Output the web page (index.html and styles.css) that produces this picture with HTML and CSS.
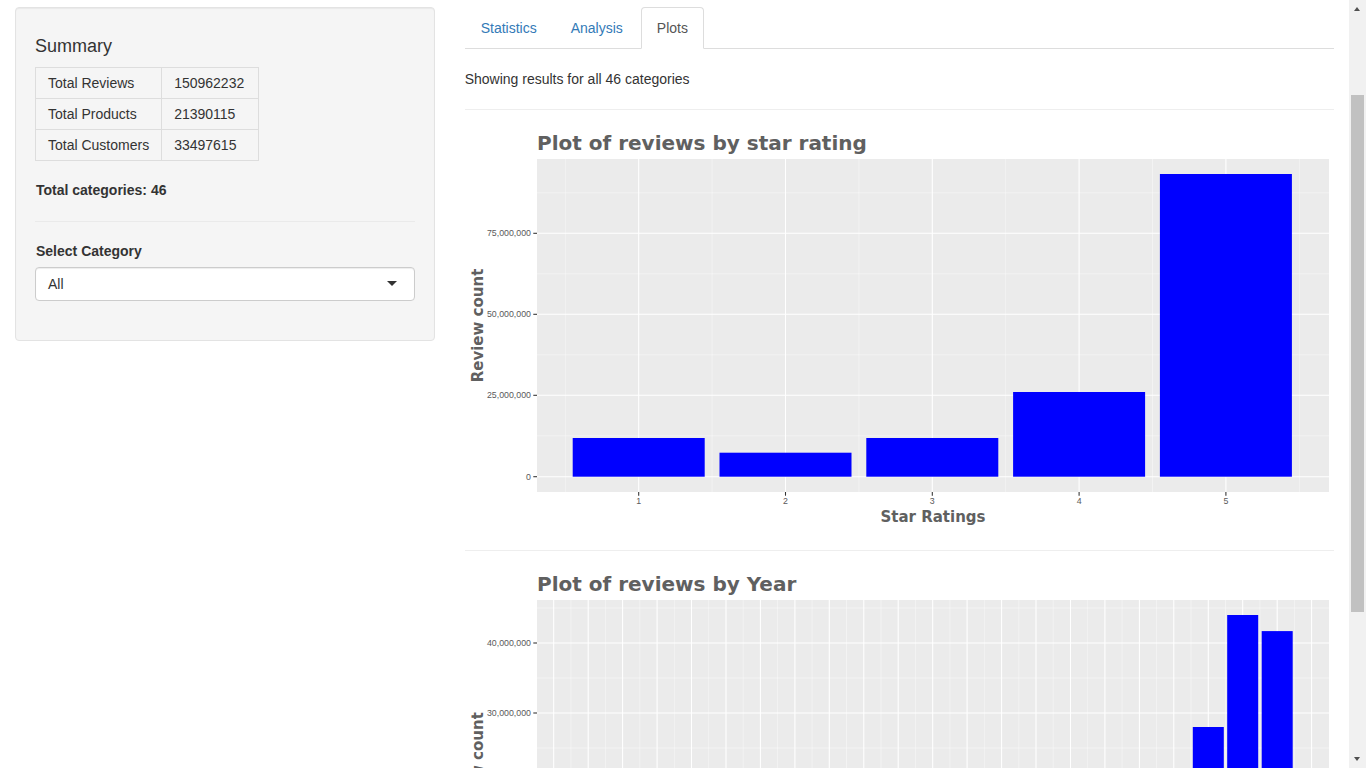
FILE: index.html
```html
<!DOCTYPE html>
<html lang="en">
<head>
<meta charset="utf-8">
<title>Amazon Reviews</title>
<link rel="stylesheet" href="styles.css">
</head>
<body>
<div class="page">
  <div class="sidebar">
    <form class="well">
      <h4>Summary</h4>
      <table class="summary">
        <tbody>
          <tr><td>Total Reviews</td><td>150962232</td></tr>
          <tr><td>Total Products</td><td>21390115</td></tr>
          <tr><td>Total Customers</td><td>33497615</td></tr>
        </tbody>
      </table>
      <div class="total">Total categories: 46</div>
      <hr class="well-hr">
      <div class="form-group">
        <label class="ctrl-label">Select Category</label>
        <div class="select-box">All</div>
      </div>
    </form>
  </div>

  <div class="main">
    <ul class="tabs">
      <li><a href="#">Statistics</a></li>
      <li><a href="#">Analysis</a></li>
      <li><a href="#" class="active">Plots</a></li>
    </ul>
    <div class="showing">Showing results for all 46 categories</div>
    <hr class="sep">

    <svg class="plot" width="869" height="400" viewBox="0 0 869 400">
      <text class="p-title" x="72" y="19.5">Plot of reviews by star rating</text>
      <rect x="72" y="29" width="792" height="333" fill="#ebebeb"/>
      <g class="grid-minor">
        <line x1="72" x2="864" y1="62.8" y2="62.8"/>
        <line x1="72" x2="864" y1="143.8" y2="143.8"/>
        <line x1="72" x2="864" y1="224.8" y2="224.8"/>
        <line x1="72" x2="864" y1="305.8" y2="305.8"/>
        <line y1="29" y2="362" x1="100.3" x2="100.3"/>
        <line y1="29" y2="362" x1="247.1" x2="247.1"/>
        <line y1="29" y2="362" x1="393.9" x2="393.9"/>
        <line y1="29" y2="362" x1="540.7" x2="540.7"/>
        <line y1="29" y2="362" x1="687.5" x2="687.5"/>
        <line y1="29" y2="362" x1="834.3" x2="834.3"/>
      </g>
      <g class="grid-major">
        <line x1="72" x2="864" y1="103.3" y2="103.3"/>
        <line x1="72" x2="864" y1="184.3" y2="184.3"/>
        <line x1="72" x2="864" y1="265.3" y2="265.3"/>
        <line x1="72" x2="864" y1="346.7" y2="346.7"/>
        <line y1="29" y2="362" x1="173.7" x2="173.7"/>
        <line y1="29" y2="362" x1="320.5" x2="320.5"/>
        <line y1="29" y2="362" x1="467.3" x2="467.3"/>
        <line y1="29" y2="362" x1="614.1" x2="614.1"/>
        <line y1="29" y2="362" x1="760.9" x2="760.9"/>
      </g>
      <g class="bar">
        <rect x="107.7" y="308" width="132" height="38.7"/>
        <rect x="254.5" y="322.7" width="132" height="24"/>
        <rect x="401.3" y="308" width="132" height="38.7"/>
        <rect x="548.1" y="262" width="132" height="84.7"/>
        <rect x="694.9" y="44" width="132" height="302.7"/>
      </g>
      <g class="tick">
        <line x1="68.3" x2="72" y1="103.3" y2="103.3"/>
        <line x1="68.3" x2="72" y1="184.3" y2="184.3"/>
        <line x1="68.3" x2="72" y1="265.3" y2="265.3"/>
        <line x1="68.3" x2="72" y1="346.7" y2="346.7"/>
        <line y1="362" y2="365.7" x1="173.7" x2="173.7"/>
        <line y1="362" y2="365.7" x1="320.5" x2="320.5"/>
        <line y1="362" y2="365.7" x1="467.3" x2="467.3"/>
        <line y1="362" y2="365.7" x1="614.1" x2="614.1"/>
        <line y1="362" y2="365.7" x1="760.9" x2="760.9"/>
      </g>
      <g class="p-tick y-lab">
        <text x="66" y="106.4">75,000,000</text>
        <text x="66" y="187.4">50,000,000</text>
        <text x="66" y="268.4">25,000,000</text>
        <text x="66" y="349.8">0</text>
      </g>
      <g class="p-tick x-lab">
        <text x="173.7" y="374">1</text>
        <text x="320.5" y="374">2</text>
        <text x="467.3" y="374">3</text>
        <text x="614.1" y="374">4</text>
        <text x="760.9" y="374">5</text>
      </g>
      <text class="p-axis-title" x="468" y="391.7" text-anchor="middle">Star Ratings</text>
      <text class="p-axis-title" transform="translate(18,195.5) rotate(-90)" text-anchor="middle">Review count</text>
    </svg>

    <hr class="sep">

    <svg class="plot" width="869" height="400" viewBox="0 0 869 400">
      <text class="p-title" x="72" y="19.5">Plot of reviews by Year</text>
      <rect x="72" y="29" width="792" height="338.4" fill="#ebebeb"/>
      <g class="grid-minor">
        <line x1="72" x2="864" y1="37" y2="37"/>
        <line x1="72" x2="864" y1="107" y2="107"/>
        <line x1="72" x2="864" y1="177" y2="177"/>
        <line x1="72" x2="864" y1="247" y2="247"/>
        <line x1="72" x2="864" y1="317" y2="317"/>
        <line y1="29" y2="367.4" x1="105.9" x2="105.9"/>
        <line y1="29" y2="367.4" x1="140.4" x2="140.4"/>
        <line y1="29" y2="367.4" x1="174.8" x2="174.8"/>
        <line y1="29" y2="367.4" x1="209.3" x2="209.3"/>
        <line y1="29" y2="367.4" x1="243.7" x2="243.7"/>
        <line y1="29" y2="367.4" x1="278.2" x2="278.2"/>
        <line y1="29" y2="367.4" x1="312.6" x2="312.6"/>
        <line y1="29" y2="367.4" x1="347.1" x2="347.1"/>
        <line y1="29" y2="367.4" x1="381.5" x2="381.5"/>
        <line y1="29" y2="367.4" x1="416" x2="416"/>
        <line y1="29" y2="367.4" x1="450.4" x2="450.4"/>
        <line y1="29" y2="367.4" x1="484.9" x2="484.9"/>
        <line y1="29" y2="367.4" x1="519.3" x2="519.3"/>
        <line y1="29" y2="367.4" x1="553.8" x2="553.8"/>
        <line y1="29" y2="367.4" x1="588.2" x2="588.2"/>
        <line y1="29" y2="367.4" x1="622.7" x2="622.7"/>
        <line y1="29" y2="367.4" x1="657.1" x2="657.1"/>
        <line y1="29" y2="367.4" x1="691.6" x2="691.6"/>
        <line y1="29" y2="367.4" x1="726" x2="726"/>
        <line y1="29" y2="367.4" x1="760.5" x2="760.5"/>
        <line y1="29" y2="367.4" x1="794.9" x2="794.9"/>
        <line y1="29" y2="367.4" x1="829.4" x2="829.4"/>
      </g>
      <g class="grid-major">
        <line x1="72" x2="864" y1="72" y2="72"/>
        <line x1="72" x2="864" y1="142" y2="142"/>
        <line x1="72" x2="864" y1="212" y2="212"/>
        <line x1="72" x2="864" y1="282" y2="282"/>
        <line x1="72" x2="864" y1="352" y2="352"/>
        <line y1="29" y2="367.4" x1="88.7" x2="88.7"/>
        <line y1="29" y2="367.4" x1="123.2" x2="123.2"/>
        <line y1="29" y2="367.4" x1="157.6" x2="157.6"/>
        <line y1="29" y2="367.4" x1="192.1" x2="192.1"/>
        <line y1="29" y2="367.4" x1="226.5" x2="226.5"/>
        <line y1="29" y2="367.4" x1="261" x2="261"/>
        <line y1="29" y2="367.4" x1="295.4" x2="295.4"/>
        <line y1="29" y2="367.4" x1="329.9" x2="329.9"/>
        <line y1="29" y2="367.4" x1="364.3" x2="364.3"/>
        <line y1="29" y2="367.4" x1="398.8" x2="398.8"/>
        <line y1="29" y2="367.4" x1="433.2" x2="433.2"/>
        <line y1="29" y2="367.4" x1="467.7" x2="467.7"/>
        <line y1="29" y2="367.4" x1="502.1" x2="502.1"/>
        <line y1="29" y2="367.4" x1="536.6" x2="536.6"/>
        <line y1="29" y2="367.4" x1="571" x2="571"/>
        <line y1="29" y2="367.4" x1="605.5" x2="605.5"/>
        <line y1="29" y2="367.4" x1="639.9" x2="639.9"/>
        <line y1="29" y2="367.4" x1="674.4" x2="674.4"/>
        <line y1="29" y2="367.4" x1="708.8" x2="708.8"/>
        <line y1="29" y2="367.4" x1="743.3" x2="743.3"/>
        <line y1="29" y2="367.4" x1="777.7" x2="777.7"/>
        <line y1="29" y2="367.4" x1="812.2" x2="812.2"/>
        <line y1="29" y2="367.4" x1="846.6" x2="846.6"/>
      </g>
      <g class="bar">
        <rect x="176.6" y="351.3" width="31" height="0.7"/>
        <rect x="211" y="349.9" width="31" height="2.1"/>
        <rect x="245.5" y="347.8" width="31" height="4.2"/>
        <rect x="279.9" y="345" width="31" height="7"/>
        <rect x="314.4" y="340.8" width="31" height="11.2"/>
        <rect x="348.8" y="340.8" width="31" height="11.2"/>
        <rect x="383.3" y="340.1" width="31" height="11.9"/>
        <rect x="417.7" y="339.4" width="31" height="12.6"/>
        <rect x="452.2" y="336.6" width="31" height="15.4"/>
        <rect x="486.6" y="332.4" width="31" height="19.6"/>
        <rect x="521.1" y="328.9" width="31" height="23.1"/>
        <rect x="555.5" y="319.8" width="31" height="32.2"/>
        <rect x="590" y="315.6" width="31" height="36.4"/>
        <rect x="624.4" y="309.3" width="31" height="42.7"/>
        <rect x="658.9" y="300.9" width="31" height="51.1"/>
        <rect x="693.3" y="265.2" width="31" height="86.8"/>
        <rect x="727.8" y="156" width="31" height="196"/>
        <rect x="762.2" y="44" width="31" height="308"/>
        <rect x="796.7" y="60.1" width="31" height="291.9"/>
        <rect x="831.1" y="268" width="31" height="84"/>
      </g>
      <g class="tick">
        <line x1="68.3" x2="72" y1="72" y2="72"/>
        <line x1="68.3" x2="72" y1="142" y2="142"/>
        <line x1="68.3" x2="72" y1="212" y2="212"/>
        <line x1="68.3" x2="72" y1="282" y2="282"/>
        <line x1="68.3" x2="72" y1="352" y2="352"/>
      </g>
      <g class="p-tick y-lab">
        <text x="66" y="75.1">40,000,000</text>
        <text x="66" y="145.1">30,000,000</text>
      </g>
      <text class="p-axis-title" transform="translate(18,198) rotate(-90)" text-anchor="middle">Review count</text>
    </svg>
  </div>
</div>

<div class="scrollbar" aria-hidden="true">
  <span class="sb-up"></span>
  <span class="sb-thumb"></span>
  <span class="sb-down"></span>
</div>
</body>
</html>
```

FILE: styles.css
```css
html, body {
  margin: 0;
  height: 100%;
  overflow: hidden;
}

body {
  font-family: "Liberation Sans", Arial, sans-serif;
  font-size: 14px;
  line-height: 1.42857;
  color: #333;
  background: #fff;
}

.page {
  display: grid;
  grid-template-columns: 4fr 8fr;
  width: 1349px;
  padding-top: 7px;
}

.sidebar,
.main {
  padding: 0 15px;
  min-width: 0;
}

/* ---------- sidebar ---------- */
.well {
  background: #f5f5f5;
  border: 1px solid #e3e3e3;
  border-radius: 4px;
  box-shadow: inset 0 1px 1px rgba(0, 0, 0, 0.05);
  padding: 19px;
  margin: 0;
}

.well h4 {
  font-size: 18px;
  font-weight: normal;
  line-height: 1.1;
  margin: 10px 0;
  color: #333;
}

.summary {
  border-collapse: collapse;
  border: 1px solid #ddd;
  margin-bottom: 20px;
}

.summary td {
  border: 1px solid #ddd;
  padding: 5px 12px;
  line-height: 20px;
  white-space: nowrap;
}

.summary td + td {
  padding-right: 14px;
}

.total {
  font-weight: bold;
  padding-left: 1px;
}

.well-hr {
  margin: 20px 0;
  border: 0;
  border-top: 1px solid #eaeaea;
}

.form-group {
  margin-bottom: 20px;
}

.ctrl-label {
  display: inline-block;
  font-weight: bold;
  margin-bottom: 5px;
  padding-left: 1px;
}

.select-box {
  position: relative;
  background: #fff;
  border: 1px solid #ccc;
  border-radius: 4px;
  box-shadow: inset 0 1px 1px rgba(0, 0, 0, 0.075);
  padding: 6px 12px;
  line-height: 20px;
  color: #333;
}

.select-box::after {
  content: "";
  position: absolute;
  right: 17px;
  top: 50%;
  margin-top: -3px;
  width: 0;
  height: 0;
  border-style: solid;
  border-width: 5px 5px 0 5px;
  border-color: #333 transparent transparent transparent;
}

/* ---------- main ---------- */
.tabs {
  display: flex;
  list-style: none;
  margin: 0;
  padding: 0;
  border-bottom: 1px solid #ddd;
}

.tabs li {
  margin-bottom: -1px;
}

.tabs a {
  display: block;
  padding: 10px 15px;
  margin-right: 2px;
  line-height: 20px;
  border: 1px solid transparent;
  border-radius: 4px 4px 0 0;
  color: #337ab7;
  text-decoration: none;
}

.tabs a.active {
  color: #555;
  background: #fff;
  border-color: #ddd #ddd transparent #ddd;
}

.showing {
  box-sizing: border-box;
  margin-top: 20px;
  padding-top: 1px;
  height: 20px;
}

.sep {
  margin: 20px 0;
  border: 0;
  border-top: 1px solid #eee;
}

.plot {
  display: block;
}

/* ---------- plot styling ---------- */
.p-title {
  font-family: "DejaVu Sans", sans-serif;
  font-weight: bold;
  font-size: 20px;
  fill: #606060;
}

.p-axis-title {
  font-family: "DejaVu Sans", sans-serif;
  font-weight: bold;
  font-size: 15px;
  fill: #606060;
}

.p-tick {
  font-family: "Liberation Sans", Arial, sans-serif;
  font-size: 8.8px;
  fill: #5a5a5a;
}

.y-lab {
  text-anchor: end;
}

.x-lab {
  text-anchor: middle;
}

.grid-major line {
  stroke: #fff;
  stroke-width: 1.07;
}

.grid-minor line {
  stroke: #fff;
  stroke-width: 0.53;
  opacity: 0.8;
}

.tick line {
  stroke: #333;
  stroke-width: 1.07;
}

.bar rect {
  fill: #0000ff;
}

/* ---------- fake page scrollbar ---------- */
.scrollbar {
  position: fixed;
  top: 0;
  right: 0;
  width: 17px;
  height: 100%;
  background: #f1f1f1;
}

.sb-thumb {
  position: absolute;
  left: 2px;
  top: 95px;
  width: 13px;
  height: 517px;
  background: #c1c1c1;
}

.sb-up,
.sb-down {
  position: absolute;
  left: 5px;
  width: 0;
  height: 0;
  border-left: 3.5px solid transparent;
  border-right: 3.5px solid transparent;
}

.sb-up {
  top: 7px;
  border-bottom: 4px solid #505050;
}

.sb-down {
  bottom: 7px;
  border-top: 4px solid #505050;
}
```
